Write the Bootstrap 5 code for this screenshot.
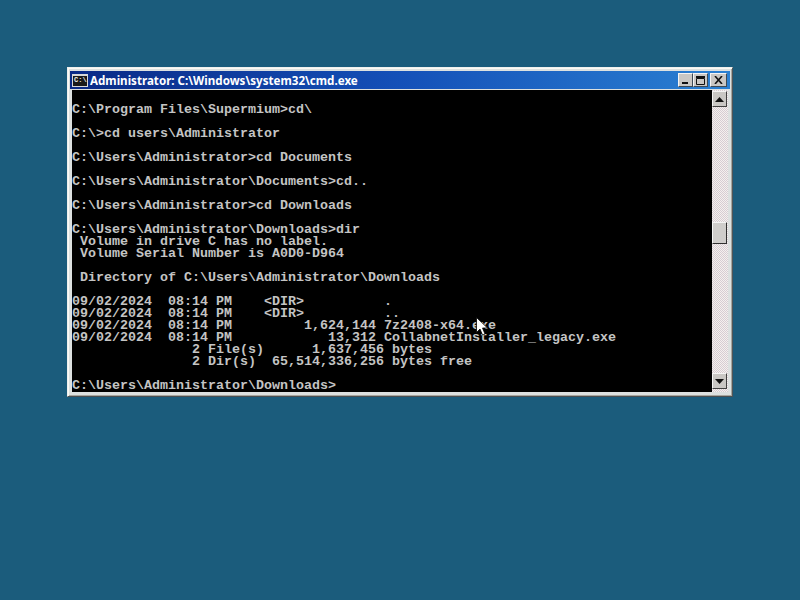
<!DOCTYPE html>
<html lang="en"><head><meta charset="utf-8"><title>cmd</title>
<link href="https://cdn.jsdelivr.net/npm/bootstrap@5.3.0/dist/css/bootstrap.min.css" rel="stylesheet">
<style>
html,body{height:100%}
body{background:#1b5c7c;margin:0;overflow:hidden}
.desk{width:800px;height:600px;padding:67px 0 0 67px;position:relative}
.win{width:666px;height:330px;background:#dde1e0;border:1px solid #eef0ee;border-right-color:#4f5558;border-bottom-color:#4a4f52;box-shadow:inset 1px 1px 0 #fbfaf4,inset -1px -1px 0 #a8a69e;padding:3px 2px}
.ttl{height:18px;background:linear-gradient(90deg,#0a2a86,#1450b8 50%,#2a80d2);color:#fff;font:bold 11.6px "Noto Sans",sans-serif;padding:0 3px 0 2px;margin-bottom:1px}
.ico{width:16px;height:13px;background:#1a1a1a;border:1px solid #d8d8d8;border-top-width:2px;color:#eee;font:bold 7px/9px "Liberation Mono",monospace;text-align:left;padding-left:1px;margin-right:2px}
.tbtn{width:15px;height:14px;background:#c9c7c4;border:1px solid;border-color:#f4f4f4 #3d4a55 #3d4a55 #f4f4f4;display:flex;align-items:center;justify-content:center}
.tbtn.cl{width:17px;margin-left:2px}
.cons{width:640px;height:302px;background:#000;color:#c4c4c4;font:bold 13.33px/12px "Liberation Mono",monospace;white-space:pre;margin:0 0 0 2px;padding-top:2px}
.sb{width:16px;height:302px;background:repeating-conic-gradient(#f4f1ee 0 25%,#d7ccd3 0 50%) 0 0/2px 2px}
.sbtn{width:15px;height:16px;background:#c9c7c4;border:1px solid;border-color:#f4f4f4 #404040 #404040 #f4f4f4;display:flex;align-items:center;justify-content:center;margin-top:1px}
.sbtn.dn{margin-top:auto;margin-bottom:3px}
.thumb{width:15px;height:22px;margin-top:115px;background:#cfcdcb;border:1px solid;border-color:#f4f4f4 #303030 #303030 #f4f4f4}
.ptr{position:absolute;left:476px;top:317px;width:12px;height:19px}
</style></head><body>
<div class="desk">
<div class="win">
<div class="ttl d-flex align-items-center">
<div class="ico flex-shrink-0">C:\</div><div class="flex-grow-1 text-nowrap">Administrator: C:\Windows\system32\cmd.exe</div>
<div class="tbtn"><svg width="8" height="8" viewBox="0 0 8 8"><rect x="0" y="6" width="6" height="2" fill="#111"/></svg></div>
<div class="tbtn"><svg width="10" height="9" viewBox="0 0 10 9"><path d="M.5 2.500h8v6h-8z" fill="none" stroke="#111" stroke-width="1"/><path d="M0 1h9" stroke="#111" stroke-width="2"/></svg></div>
<div class="tbtn cl"><svg width="9" height="8" viewBox="0 0 9 8"><path d="M1 0l7 8M8 0l-7 8" stroke="#111" stroke-width="1.6"/></svg></div>
</div>
<div class="d-flex">
<pre class="cons">

C:\Program Files\Supermium&gt;cd\

C:\&gt;cd users\Administrator

C:\Users\Administrator&gt;cd Documents

C:\Users\Administrator\Documents&gt;cd..

C:\Users\Administrator&gt;cd Downloads

C:\Users\Administrator\Downloads&gt;dir
 Volume in drive C has no label.
 Volume Serial Number is A0D0-D964

 Directory of C:\Users\Administrator\Downloads

09/02/2024  08:14 PM    &lt;DIR&gt;          .
09/02/2024  08:14 PM    &lt;DIR&gt;          ..
09/02/2024  08:14 PM         1,624,144 7z2408-x64.exe
09/02/2024  08:14 PM            13,312 CollabnetInstaller_legacy.exe
               2 File(s)      1,637,456 bytes
               2 Dir(s)  65,514,336,256 bytes free

C:\Users\Administrator\Downloads&gt;</pre>
<div class="sb d-flex flex-column">
<div class="sbtn"><svg width="9" height="5" viewBox="0 0 9 5"><path d="M4.500 0l4.500 5H0z" fill="#111"/></svg></div>
<div class="thumb"></div>
<div class="sbtn dn"><svg width="9" height="5" viewBox="0 0 9 5"><path d="M0 0h9L4.500 5z" fill="#111"/></svg></div>
</div>
</div>
</div>
<svg class="ptr" viewBox="0 0 12 19"><path d="M.5.5v15l3.5-3.5 2.5 6 2.5-1-2.5-6h5z" fill="#fff" stroke="#000" stroke-width=".8"/></svg>
</div>
</body></html>
